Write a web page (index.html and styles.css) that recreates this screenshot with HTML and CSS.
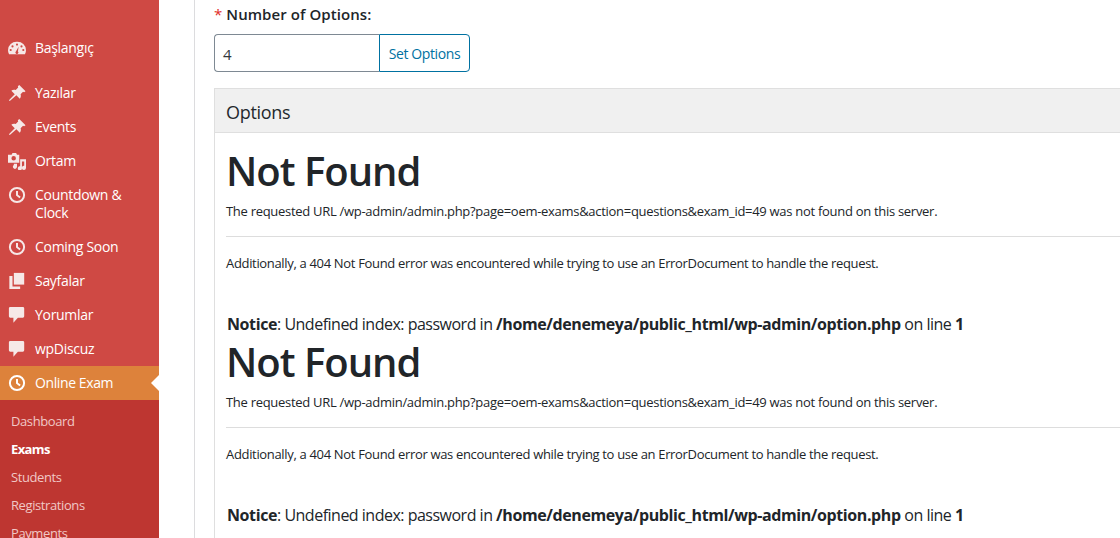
FILE: index.html
```html
<!DOCTYPE html>
<html lang="tr">
<head>
<meta charset="utf-8">
<title>Options</title>
<link rel="stylesheet" href="styles.css">
</head>
<body>
<div class="app">
  <nav class="sidebar">
    <ul class="menu">
      <li class="item first"><svg class="ico" viewBox="0 0 20 20"><path d="M10 3a9.500 9.500 0 0 0-10 9.500c0 1.500.4 3 1.200 4.500h17.600c.8-1.500 1.200-3 1.200-4.500A9.500 9.500 0 0 0 10 3zM10 5a1.200 1.200 0 1 1 0 2.400A1.200 1.200 0 0 1 10 5zM5 7a1.200 1.200 0 1 1 0 2.400A1.200 1.200 0 0 1 5 7zM15 7a1.200 1.200 0 1 1 0 2.400A1.200 1.200 0 0 1 15 7zM3 11a1.200 1.200 0 1 1 0 2.400A1.200 1.200 0 0 1 3 11zM17 11a1.200 1.200 0 1 1 0 2.400A1.200 1.200 0 0 1 17 11zM11.800 8.500l-.8 5.300a1.600 1.600 0 1 1-2.200 0z" fill-rule="evenodd"/></svg><span>Başlangıç</span></li>
      <li class="item gap"><svg class="ico" viewBox="0 0 20 20"><path d="M12.500 1l7 7-1.600 1.200-1.200-.5-2.700 2.700c.6 2.100.2 3.700-.9 4.900l-3.800-3.800L2 19l-1-1 6.500-6.700L3.700 7.500C4.900 6.400 6.500 6 8.600 6.600l2.700-2.700-.4-1.300z"/></svg><span>Yazılar</span></li>
      <li class="item"><svg class="ico" viewBox="0 0 20 20"><path d="M12.500 1l7 7-1.600 1.200-1.200-.5-2.700 2.700c.6 2.100.2 3.700-.9 4.900l-3.800-3.800L2 19l-1-1 6.500-6.700L3.700 7.500C4.900 6.400 6.500 6 8.600 6.600l2.700-2.700-.4-1.300z"/></svg><span>Events</span></li>
      <li class="item"><svg class="ico" viewBox="0 0 20 20"><path fill-rule="evenodd" d="M5 1h4l1 2h2.500v9H0V3h4zM6.300 4.500a2.500 2.500 0 1 0 0 5 2.500 2.500 0 0 0 0-5z"/><path d="M13.500 8H20v9.500a2.300 2.300 0 1 1-2-2.200V10.500h-2.500v7.500a2.300 2.300 0 1 1-2-2.200zM6.500 13H10v3.500a2.300 2.300 0 1 1-3.500-2z"/></svg><span>Ortam</span></li>
      <li class="item"><svg class="ico" viewBox="0 0 20 20"><path fill-rule="evenodd" d="M10 1a9 9 0 1 0 0 18 9 9 0 0 0 0-18zM10 3.200a6.800 6.800 0 1 1 0 13.600 6.800 6.800 0 0 1 0-13.600zM8.900 5.500h2.200v4.100l3 2.400-1.300 1.600-3.900-3z"/></svg><span>Countdown &amp; Clock</span></li>
      <li class="item"><svg class="ico" viewBox="0 0 20 20"><path fill-rule="evenodd" d="M10 1a9 9 0 1 0 0 18 9 9 0 0 0 0-18zM10 3.200a6.800 6.800 0 1 1 0 13.600 6.800 6.800 0 0 1 0-13.600zM8.900 5.500h2.200v4.100l3 2.400-1.300 1.600-3.900-3z"/></svg><span>Coming Soon</span></li>
      <li class="item"><svg class="ico" viewBox="0 0 20 20"><path d="M6.500 1H18v13H6.500z"/><path d="M1.500 4.500h3.500V16h8.500v3H1.500z"/></svg><span>Sayfalar</span></li>
      <li class="item"><svg class="ico" viewBox="0 0 20 20"><path d="M2.500 1h14A1.500 1.500 0 0 1 18 2.500v9a1.500 1.500 0 0 1-1.500 1.500H11l-5 5.500V13H2.500A1.500 1.500 0 0 1 1 11.500v-9A1.500 1.500 0 0 1 2.500 1z"/></svg><span>Yorumlar</span></li>
      <li class="item"><svg class="ico" viewBox="0 0 20 20"><path d="M2.500 1h14A1.500 1.500 0 0 1 18 2.500v9a1.500 1.500 0 0 1-1.500 1.500H11l-5 5.500V13H2.500A1.500 1.500 0 0 1 1 11.500v-9A1.500 1.500 0 0 1 2.500 1z"/></svg><span>wpDiscuz</span></li>
      <li class="item active"><svg class="ico" viewBox="0 0 20 20"><path fill-rule="evenodd" d="M10 1a9 9 0 1 0 0 18 9 9 0 0 0 0-18zM10 3.200a6.800 6.800 0 1 1 0 13.600 6.800 6.800 0 0 1 0-13.600zM8.900 5.500h2.200v4.100l3 2.400-1.300 1.600-3.900-3z"/></svg><span>Online Exam</span></li>
    </ul>
    <ul class="submenu">
      <li>Dashboard</li>
      <li class="current">Exams</li>
      <li>Students</li>
      <li>Registrations</li>
      <li>Payments</li>
    </ul>
  </nav>
  <main class="content">
    <div class="label"><span class="req">*</span> Number of Options:</div>
    <div class="group">
      <div class="field">4</div>
      <button class="btn">Set Options</button>
    </div>
    <section class="card">
      <div class="card-head">Options</div>
      <div class="card-body">
        <div class="err">
          <h1>Not Found</h1>
          <p>The requested URL /wp-admin/admin.php?page=oem-exams&amp;action=questions&amp;exam_id=49 was not found on this server.</p>
          <hr>
          <p class="extra">Additionally, a 404 Not Found error was encountered while trying to use an ErrorDocument to handle the request.</p>
          <div class="notice"><b>Notice</b>: Undefined index: password in <b>/home/denemeya/public_html/wp-admin/option.php</b> on line <b>1</b></div>
        </div>
        <div class="err">
          <h1>Not Found</h1>
          <p>The requested URL /wp-admin/admin.php?page=oem-exams&amp;action=questions&amp;exam_id=49 was not found on this server.</p>
          <hr>
          <p class="extra">Additionally, a 404 Not Found error was encountered while trying to use an ErrorDocument to handle the request.</p>
          <div class="notice"><b>Notice</b>: Undefined index: password in <b>/home/denemeya/public_html/wp-admin/option.php</b> on line <b>1</b></div>
        </div>
        <div class="err">
          <h1>Not Found</h1>
        </div>
      </div>
    </section>
  </main>
</div>
</body>
</html>
```

FILE: styles.css
```css
* { box-sizing: border-box; }
html, body { margin: 0; padding: 0; height: 538px; overflow: hidden; background: #fff; }
body { font-family: "Open Sans", "Noto Sans", sans-serif; color: #212529; }
.app { display: flex; width: 1120px; height: 538px; overflow: hidden; }

.sidebar { flex: 0 0 159px; height: 538px; background: #cf4944; overflow: hidden; padding-top: 31px; color: #fff; }
.menu, .submenu { list-style: none; margin: 0; padding: 0; }
.item { position: relative; display: flex; align-items: flex-start; gap: 8px; padding: 8px; font-size: 14px; line-height: 18px; letter-spacing: -.3px; color: #fff; }
.item span { padding-left: 1px; max-width: 100px; }
.item.gap { margin-top: 11px; }
.ico { flex: 0 0 18px; width: 18px; height: 18px; fill: #f6e8e7; }
.item.active { background: #dd823b; }
.item.active span { letter-spacing: -.4px; }
.item.active .ico { fill: #fff; }
.item.active::after { content: ""; position: absolute; right: 0; top: 9px; border: 8px solid transparent; border-right-color: #fff; border-left-width: 0; }
.submenu { background: #be3631; padding-top: 7px; }
.submenu li { font-size: 13px; line-height: 28px; padding-left: 11px; color: #f0c8c6; letter-spacing: -.4px; }
.submenu li.current { color: #fff; font-weight: 700; letter-spacing: -.6px; }

.content { flex: 1 1 auto; min-width: 0; border-left: 1px solid #dcdcde; margin-left: 35px; padding: 5px 0 0 19px; }
.label { font-size: 15px; line-height: 18px; font-weight: 600; letter-spacing: .07px; color: #212529; }
.req { color: #e02b27; font-weight: 400; }
.group { display: flex; width: 256px; height: 38px; margin-top: 11px; }
.field { flex: 0 0 165px; border: 1px solid #7e8993; border-right: 0; border-radius: 4px 0 0 4px; padding: 10px 8px; font-size: 15px; line-height: 18px; color: #32373c; }
.btn { flex: 1; border: 1px solid #0071a1; border-radius: 0 4px 4px 0; background: #fff; color: #0071a1; font: 14px/18px "Open Sans", sans-serif; letter-spacing: -.4px; padding: 2px 0 0; }

.card { width: 1000px; margin-top: 16px; border: 1px solid #dfdfdf; }
.card-head { height: 44px; background: #f0f0f0; border-bottom: 1px solid #dfdfdf; padding: 0 11px; font-size: 18px; line-height: 46px; letter-spacing: -.3px; color: #23282d; }
.card-body { padding: 14px 11px 0; }
.err h1 { margin: 0; font-size: 40px; line-height: 48px; font-weight: 600; letter-spacing: -1px; color: #212529; }
.err p { margin: 0; font-size: 13px; line-height: 18px; letter-spacing: -.29px; }
.err h1 + p { margin-top: 7px; }
.err hr { margin: 16px 0 0; border: 0; border-top: 1px solid #ddd; }
.err hr + p { margin-top: 17px; }
.err p.extra { letter-spacing: -.33px; }
.notice { margin-top: 41px; padding-left: 1px; font-size: 16px; line-height: 22px; letter-spacing: -.5px; height: 25px; white-space: nowrap; }
.notice b { font-weight: 700; letter-spacing: -.4px; }
```
